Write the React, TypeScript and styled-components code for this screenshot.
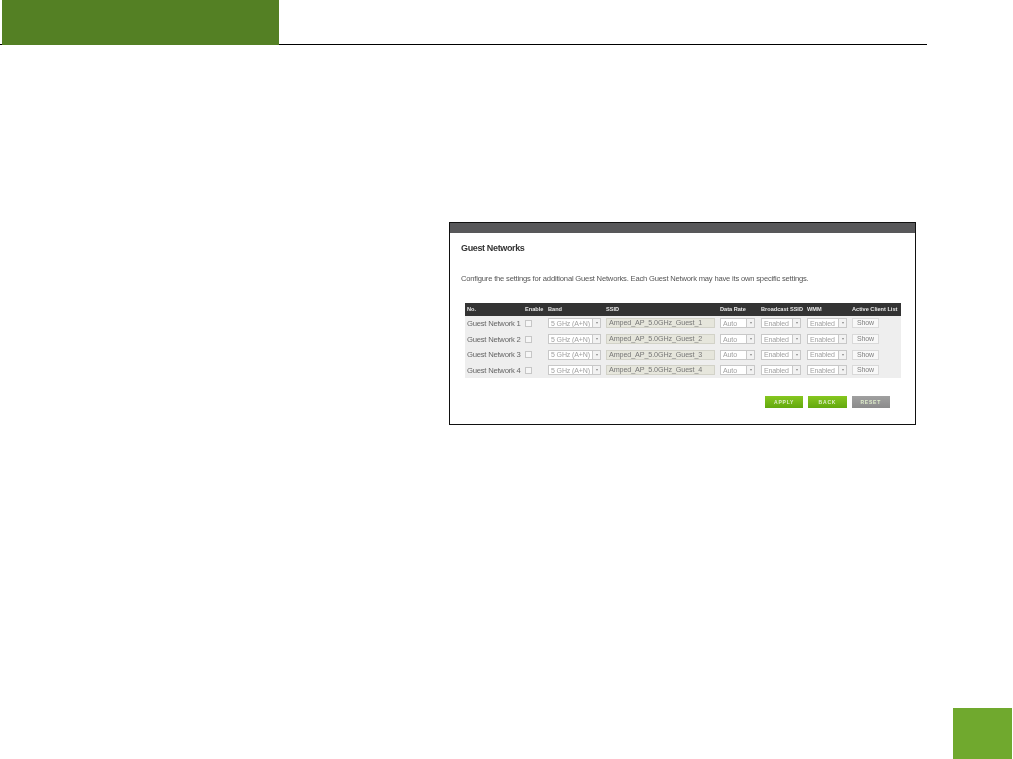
import React from "react";
import styled, { createGlobalStyle } from "styled-components";

const Global = createGlobalStyle`
  html, body { margin: 0; padding: 0; background: #fff; }
  body { font-family: "Liberation Sans", Arial, sans-serif; }
`;

const Page = styled.div`
  width: 1013px;
  height: 759px;
  display: flex;
  flex-direction: column;
  overflow: hidden;
`;

const Header = styled.header`
  width: 927px;
  height: 45px;
  box-sizing: border-box;
  padding-left: 2px;
  border-bottom: 1px solid #000;
  flex: none;
`;

const HeaderTab = styled.div`
  width: 277px;
  height: 45px;
  background: #548024;
`;

const Panel = styled.section`
  flex: none;
  box-sizing: border-box;
  width: 467px;
  height: 203px;
  margin: 177px 0 0 449px;
  border: 1px solid #111;
  background: #fff;
  filter: blur(0.5px);
`;

const PanelBar = styled.div`
  height: 10px;
  background: #58585a;
`;

const PanelBody = styled.div`
  padding: 10px 14px 0 11px;
`;

const Title = styled.h1`
  margin: 0;
  font-size: 9px;
  line-height: 11px;
  letter-spacing: -0.36px;
  font-weight: 700;
  color: #333;
`;

const Intro = styled.p`
  margin: 20px 0 0;
  font-size: 7.6px;
  letter-spacing: -0.19px;
  line-height: 10px;
  color: #555;
  white-space: nowrap;
`;

const NetTable = styled.div`
  margin: 19px 0 0 4px;
  width: 436px;
  background: #eeeeee;
`;

const grid = `
  display: grid;
  grid-template-columns: 60px 23px 58px 114px 41px 46px 45px 49px;
  align-items: center;
`;

const HeadRow = styled.div`
  ${grid}
  height: 12.5px;
  background: #333333;
`;

const HeadCell = styled.div<{ $pad?: number }>`
  padding-left: ${(p) => p.$pad ?? 0}px;
  font-size: 5.6px;
  font-weight: 700;
  color: #e8e8e8;
  white-space: nowrap;
`;

const Row = styled.div`
  ${grid}
  height: 15.7px;
`;

const RowLabel = styled.div`
  padding-left: 2px;
  font-size: 7.7px;
  letter-spacing: -0.25px;
  color: #666;
  white-space: nowrap;
`;

const CheckBox = styled.span`
  display: block;
  box-sizing: border-box;
  width: 7px;
  height: 7px;
  background: #f6f6f6;
  border: 1px solid #c6c6c6;
`;

const SelectBox = styled.div<{ $w: number }>`
  box-sizing: border-box;
  display: flex;
  justify-content: space-between;
  align-items: center;
  width: ${(p) => p.$w}px;
  height: 10px;
  padding-left: 2px;
  background: #fff;
  border: 1px solid #c8c8c8;
  font-size: 7px;
  letter-spacing: -0.12px;
  color: #a0a0a0;
  white-space: nowrap;
  overflow: hidden;
`;

const Arrow = styled.span`
  flex: none;
  display: flex;
  align-items: center;
  justify-content: center;
  box-sizing: border-box;
  width: 8px;
  height: 8px;
  border-left: 1px solid #c8c8c8;
  background: #f2f2f2;
  &::after {
    content: "";
    border: 1.5px solid transparent;
    border-top: 2px solid #888;
    border-bottom: 0;
  }
`;

const SsidInput = styled.div`
  box-sizing: border-box;
  width: 109px;
  height: 10px;
  padding-left: 2px;
  line-height: 8px;
  background: #e6e6dc;
  border: 1px solid #d2d2c8;
  font-size: 7.2px;
  letter-spacing: -0.12px;
  color: #777;
  white-space: nowrap;
`;

const ShowButton = styled.div`
  box-sizing: border-box;
  width: 27px;
  height: 10px;
  text-align: center;
  line-height: 8px;
  background: #f8f8f8;
  border: 1px solid #d9d9d9;
  font-size: 7px;
  letter-spacing: -0.1px;
  color: #808080;
`;

const Actions = styled.div`
  display: flex;
  gap: 5px;
  margin: 17.5px 0 0 304px;
`;

const ActionButton = styled.div<{ $tone: "green" | "gray" }>`
  width: 38.3px;
  height: 12px;
  text-align: center;
  line-height: 12px;
  font-size: 5px;
  font-weight: 700;
  letter-spacing: 0.8px;
  color: #dfeecb;
  background: ${(p) =>
    p.$tone === "green"
      ? "linear-gradient(#86c71f, #62a80e)"
      : "linear-gradient(#a0a0a0, #8b8b8b)"};
`;

const PageTag = styled.div`
  flex: none;
  width: 59px;
  height: 51px;
  margin: auto 1px 0 auto;
  background: #70a92e;
`;

const networks = [1, 2, 3, 4];

const App = () => (
  <Page>
    <Global />
    <Header>
      <HeaderTab />
    </Header>
    <Panel>
      <PanelBar />
      <PanelBody>
        <Title>Guest Networks</Title>
        <Intro>
          Configure the settings for additional Guest Networks. Each Guest Network may have its own specific settings.
        </Intro>
        <NetTable>
          <HeadRow>
            <HeadCell $pad={2}>No.</HeadCell>
            <HeadCell>Enable</HeadCell>
            <HeadCell>Band</HeadCell>
            <HeadCell>SSID</HeadCell>
            <HeadCell>Data Rate</HeadCell>
            <HeadCell>Broadcast SSID</HeadCell>
            <HeadCell>WMM</HeadCell>
            <HeadCell>Active Client List</HeadCell>
          </HeadRow>
          {networks.map((n) => (
            <Row key={n}>
              <RowLabel>Guest Network {n}</RowLabel>
              <CheckBox />
              <SelectBox $w={53}>
                5 GHz (A+N)
                <Arrow />
              </SelectBox>
              <SsidInput>Amped_AP_5.0GHz_Guest_{n}</SsidInput>
              <SelectBox $w={35}>
                Auto
                <Arrow />
              </SelectBox>
              <SelectBox $w={40}>
                Enabled
                <Arrow />
              </SelectBox>
              <SelectBox $w={40}>
                Enabled
                <Arrow />
              </SelectBox>
              <ShowButton>Show</ShowButton>
            </Row>
          ))}
        </NetTable>
        <Actions>
          <ActionButton $tone="green">APPLY</ActionButton>
          <ActionButton $tone="green">BACK</ActionButton>
          <ActionButton $tone="gray">RESET</ActionButton>
        </Actions>
      </PanelBody>
    </Panel>
    <PageTag />
  </Page>
);

export default App;
